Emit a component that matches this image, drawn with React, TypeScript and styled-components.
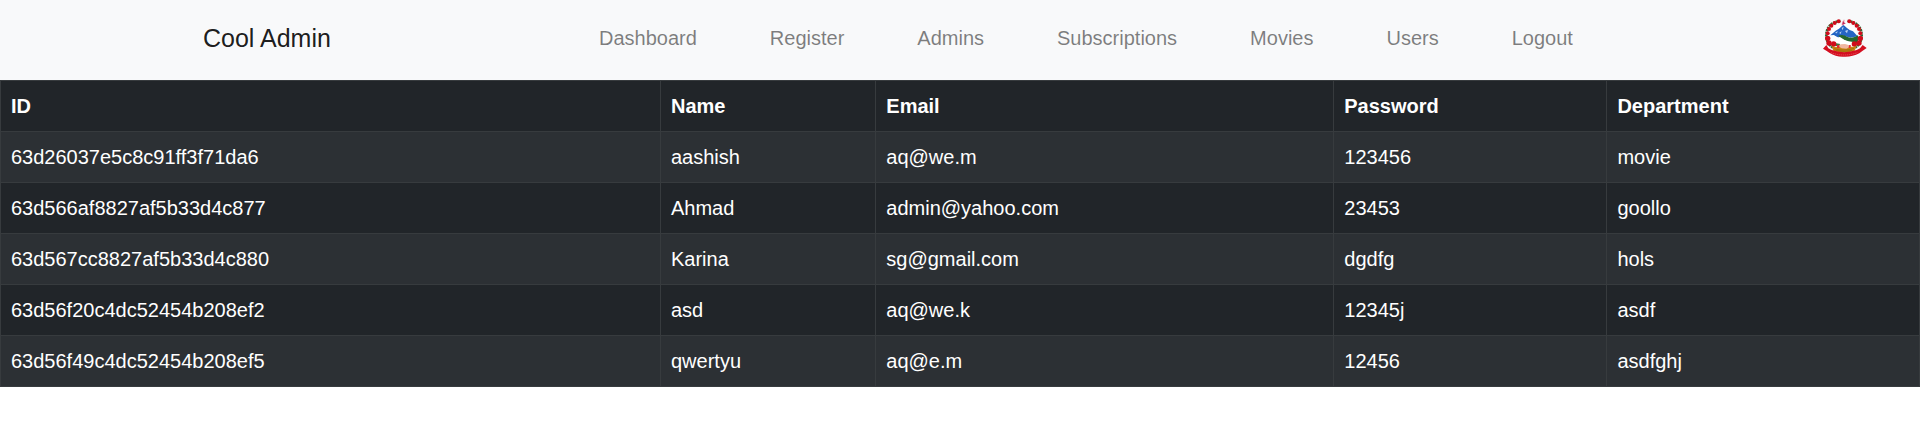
import React from "react";
import styled, { createGlobalStyle } from "styled-components";

const GlobalStyle = createGlobalStyle`
  *, *::before, *::after { box-sizing: border-box; }
  body {
    margin: 0;
    background: #fff;
    color: #212529;
    font-family: "Liberation Sans", Arial, sans-serif;
    font-size: 20px;
    line-height: 30px;
  }
`;

const Navbar = styled.header`
  display: flex;
  align-items: center;
  justify-content: space-between;
  min-height: 80px;
  padding: 0 53px 4px 203px;
  background: #f8f9fa;
`;

const Brand = styled.a`
  margin-right: 18px;
  color: rgba(0, 0, 0, 0.9);
  font-size: 25px;
  line-height: 38px;
  text-decoration: none;
  white-space: nowrap;
`;

const Links = styled.nav`
  display: flex;
  gap: 73px;
`;

const NavLink = styled.a`
  color: rgba(0, 0, 0, 0.5);
  text-decoration: none;
`;

const Emblem = styled.svg`
  display: block;
  width: 44px;
  height: 38px;
`;

const Table = styled.table`
  width: 100%;
  border-collapse: collapse;
  background: #212529;
  color: #fff;
`;

const Row = styled.tr<{ $striped?: boolean }>`
  background: ${({ $striped }) => ($striped ? "#2c3034" : "#212529")};
`;

const HeadCell = styled.th`
  padding: 10px;
  border: 1px solid #373b3e;
  font-weight: 700;
  text-align: left;
`;

const Cell = styled.td`
  padding: 10px;
  border: 1px solid #373b3e;
`;

const links = ["Dashboard", "Register", "Admins", "Subscriptions", "Movies", "Users", "Logout"];

const columns = ["ID", "Name", "Email", "Password", "Department"];

const admins = [
  ["63d26037e5c8c91ff3f71da6", "aashish", "aq@we.m", "123456", "movie"],
  ["63d566af8827af5b33d4c877", "Ahmad", "admin@yahoo.com", "23453", "goollo"],
  ["63d567cc8827af5b33d4c880", "Karina", "sg@gmail.com", "dgdfg", "hols"],
  ["63d56f20c4dc52454b208ef2", "asd", "aq@we.k", "12345j", "asdf"],
  ["63d56f49c4dc52454b208ef5", "qwertyu", "aq@e.m", "12456", "asdfghj"],
];

// Flowers on the left half of the wreath; the right half mirrors them.
const flowers = [
  [89, 37], [77, 42], [67, 50], [60, 60], [56, 73], [56, 88], [60, 102], [74, 105],
];

const Wreath = () => (
  <g>
    <path d="M94 36Q50 42 52 84Q54 104 72 116" fill="none" stroke="#2f6b35" strokeWidth="8" strokeDasharray="6 2" />
    {flowers.map(([x, y], i) => (
      <circle key={i} cx={x} cy={y} r={i > 4 ? 8 : 6} fill="#d00c1b" />
    ))}
  </g>
);

const NepalEmblem = () => (
  <Emblem viewBox="42 30 132 114" role="img" aria-label="Emblem of Nepal">
    <ellipse cx="105" cy="86" rx="42" ry="43" fill="#fff" />
    <path d="M64 79L80 65L90 59L103 47L114 57L122 63L132 67L146 82L125 86L102 80L86 86L75 78Z" fill="#2565c4" />
    <path d="M78 72L86 66L84 73ZM98 57L104 53L101 64ZM108 66L117 62L114 73ZM91 71L98 67L94 76Z" fill="#b9d2f2" />
    <path d="M87 80Q103 75 114 83Q130 91 147 79L147 103L124 101Q105 93 87 80Z" fill="#25672f" />
    <path d="M66 82Q75 77 86 85Q104 94 119 97L137 100L133 111L94 109Q68 104 66 82Z" fill="#fff" />
    <path d="M70 98Q82 103 94 105L88 113L75 109Z" fill="#397d40" />
    <Wreath />
    <g transform="translate(210 0) scale(-1 1)">
      <Wreath />
    </g>
    <path d="M98 49L98 44L100 42V38L103 35L105 31L107 35L105 40L111 44L105 46V49Z" fill="#e58aa4" />
    <path d="M100 47L102 37L109 44L103 45Z" fill="#c62856" />
    <path d="M68 111Q80 116 91 112L119 113Q133 115 143 110L137 125Q105 137 73 125Z" fill="#c98212" />
    <path d="M76 119Q104 128 135 118M80 124Q106 131 130 124" fill="none" stroke="#8d690b" strokeWidth="2" />
    <path d="M86 111L96 106L108 105L121 109L123 114L112 119L98 118Z" fill="#f0b6a0" />
    <path d="M84 109L91 107V117L84 118ZM120 108L126 109L124 118L119 117Z" fill="#e42d2d" />
    <path d="M42 119L52 108L58 118L68 123Q105 136 143 123L153 118L161 108L173 117L160 126L151 133Q130 144 105 143Q80 144 62 132L52 125Z" fill="#d40f20" />
    <path d="M66 131Q104 145 145 131" fill="none" stroke="#e86a70" strokeWidth="2" strokeDasharray="4 2" />
  </Emblem>
);

export default function App() {
  return (
    <>
      <GlobalStyle />
      <Navbar>
        <Brand href="#">Cool Admin</Brand>
        <Links aria-label="Main">
          {links.map((label) => (
            <NavLink key={label} href={`#${label.toLowerCase()}`}>
              {label}
            </NavLink>
          ))}
        </Links>
        <NepalEmblem />
      </Navbar>
      <main>
        <Table>
          <thead>
            <Row>
              {columns.map((column) => (
                <HeadCell key={column} scope="col">
                  {column}
                </HeadCell>
              ))}
            </Row>
          </thead>
          <tbody>
            {admins.map((admin, index) => (
              <Row key={admin[0]} $striped={index % 2 === 0}>
                {admin.map((value, i) => (
                  <Cell key={columns[i]}>{value}</Cell>
                ))}
              </Row>
            ))}
          </tbody>
        </Table>
      </main>
    </>
  );
}
